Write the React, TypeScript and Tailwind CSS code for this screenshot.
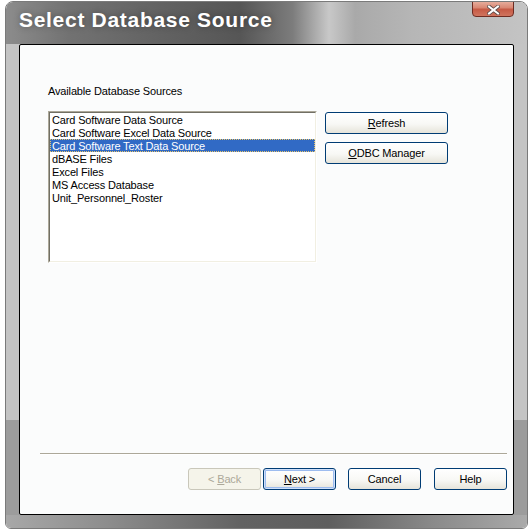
import type { ReactNode } from 'react'

const sources = [
  'Card Software Data Source',
  'Card Software Excel Data Source',
  'Card Software Text Data Source',
  'dBASE Files',
  'Excel Files',
  'MS Access Database',
  'Unit_Personnel_Roster',
]

interface XpButtonProps {
  children: ReactNode
  className?: string
  disabled?: boolean
  isDefault?: boolean
}

function XpButton({ children, className = '', disabled, isDefault }: XpButtonProps) {
  if (disabled) {
    return (
      <button
        type="button"
        className={`flex items-center justify-center rounded-[3px] border border-[#c9c7ba] bg-[#f5f4ea] text-[11px] leading-[13px] text-[#aca899] ${className}`}
      >
        {children}
      </button>
    )
  }
  return (
    <button
      type="button"
      className={`flex items-center justify-center rounded-[3px] border border-[#003c74] bg-[linear-gradient(180deg,#ffffff_0%,#f8f8f5_55%,#e6e4da_100%)] text-[11px] leading-[13px] text-black ${
        isDefault ? 'shadow-[inset_0_0_0_1px_#cfe0fa,inset_0_0_0_2px_#9dbcef]' : ''
      } ${className}`}
    >
      {children}
    </button>
  )
}

function CloseGlyph() {
  return (
    <svg width="13" height="10" viewBox="0 0 13 10">
      <path d="M2 1.5 L11 8.5 M11 1.5 L2 8.5" stroke="#5a4a48" strokeWidth="3.6" strokeLinecap="square" />
      <path d="M2 1.5 L11 8.5 M11 1.5 L2 8.5" stroke="#ffffff" strokeWidth="2" strokeLinecap="square" />
    </svg>
  )
}

export default function App() {
  return (
    <div className="h-[532px] w-[532px] bg-white pl-[5px] pt-[1px] font-['Liberation_Sans',Arial,sans-serif]">
      <div className="relative flex h-[528px] w-[523px] flex-col overflow-hidden rounded-t-[8px] rounded-b-[6px] border border-[#7a7a7a]">
        {/* title bar */}
        <div className="h-[42px] shrink-0 bg-[linear-gradient(90deg,#8c8c8c_0%,#727272_12%,#626262_30%,#565656_45%,#7c7c7c_55%,#c8c8c8_62%,#a9a9a9_67%,#b6b6b6_78%,#bcbcbc_88%,#c4c4c4_100%)] pl-[13px] pt-[6px]">
          <div className="text-[21px] font-bold leading-[24px] tracking-[0.7px] text-white [text-shadow:0_0_6px_rgba(0,0,0,0.35)]">
            Select Database Source
          </div>
        </div>

        <div className="absolute right-[13px] top-[-2px] flex h-[17px] w-[42px] items-center justify-center rounded-b-[4px] border border-[#6e2c22] bg-[linear-gradient(180deg,#e8b2a2_0%,#d98773_45%,#c65a45_55%,#d0745e_100%)] pt-[2px]">
          <CloseGlyph />
        </div>

        {/* body with frame sides */}
        <div className="flex-1 bg-[linear-gradient(180deg,#c4c4c4_0px,#c4c4c4_376px,#9c9c9c_376px,#9c9c9c_100%)] px-[13px]">
          <div className="flex h-[471px] flex-col rounded-[2px] border border-black bg-[#fbfcfc] text-[11px] tracking-[-0.15px] text-black">
            <div className="ml-[28px] mt-[40px] leading-[13px]">Available Database Sources</div>

            <div className="ml-[28px] mt-[13px] flex">
              <div className="h-[152px] w-[269px] border border-b-white border-l-[#aca899] border-r-white border-t-[#aca899]">
                <div className="h-full w-full border border-b-[#f1efe2] border-l-[#716f64] border-r-[#f1efe2] border-t-[#716f64] bg-white">
                  {sources.map((s, i) =>
                    i === 2 ? (
                      <div
                        key={s}
                        className="h-[13px] bg-[#316ac5] pl-[2px] leading-[14px] text-white outline-1 -outline-offset-1 outline-dotted outline-[#e7c46a]"
                      >
                        {s}
                      </div>
                    ) : (
                      <div key={s} className="h-[13px] pl-[2px] leading-[14px]">
                        {s}
                      </div>
                    ),
                  )}
                </div>
              </div>

              <div className="ml-[8px] flex flex-col gap-[8px] pt-[1px]">
                <XpButton className="h-[22px] w-[123px]">
                  <span className="underline">R</span>efresh
                </XpButton>
                <XpButton className="h-[22px] w-[123px]">
                  <span className="underline">O</span>DBC Manager
                </XpButton>
              </div>
            </div>

            <div className="ml-[20px] mt-[190px] h-[2px] w-[467px] border-b border-t border-b-white border-t-[#aca899]" />

            <div className="ml-[168px] mt-[13px] flex">
              <XpButton disabled className="h-[22px] w-[73px]">
                &lt; <span className="ml-[3px] underline">B</span>ack
              </XpButton>
              <XpButton isDefault className="ml-[2px] h-[22px] w-[73px]">
                <span className="underline">N</span>ext &gt;
              </XpButton>
              <XpButton className="ml-[12px] h-[22px] w-[73px]">Cancel</XpButton>
              <XpButton className="ml-[13px] h-[22px] w-[73px]">Help</XpButton>
            </div>
          </div>
        </div>

        {/* bottom frame */}
        <div className="h-[13px] shrink-0 bg-[linear-gradient(90deg,#a8a8a8_0%,#8c8c8c_20%,#626262_45%,#5e5e5e_62%,#8a8a8a_82%,#aaaaaa_100%)]" />
      </div>
    </div>
  )
}
